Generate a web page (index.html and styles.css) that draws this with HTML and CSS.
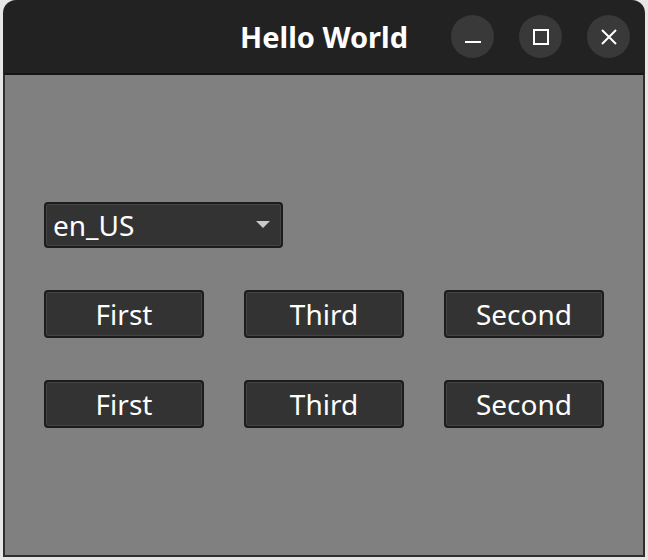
FILE: index.html
```html
<!DOCTYPE html>
<html lang="en">
<head>
    <meta charset="UTF-8">
    <title>Hello World</title>
    <link rel="stylesheet" href="styles.css">
</head>
<body>
    <div class="window">
        <div class="titlebar">
            <div></div>
            <div class="title">Hello World</div>
            <div class="controls">
                <div class="ctrl">
                    <svg width="16" height="16" viewBox="0 0 16 16"><rect x="0" y="12" width="16" height="2" fill="#fff"/></svg>
                </div>
                <div class="ctrl">
                    <svg width="16" height="16" viewBox="0 0 16 16"><rect x="1" y="1" width="14" height="14" fill="none" stroke="#fff" stroke-width="2"/></svg>
                </div>
                <div class="ctrl">
                    <svg width="16" height="16" viewBox="0 0 16 16"><path d="M1 1 L15 15 M15 1 L1 15" stroke="#fff" stroke-width="2"/></svg>
                </div>
            </div>
        </div>
        <div class="content">
            <div class="combo">
                <span>en_US</span>
                <span class="arrow"></span>
            </div>
            <div class="row">
                <button class="btn">First</button>
                <button class="btn">Third</button>
                <button class="btn">Second</button>
            </div>
            <div class="row">
                <button class="btn">First</button>
                <button class="btn">Third</button>
                <button class="btn">Second</button>
            </div>
        </div>
    </div>
</body>
</html>
```
FILE: styles.css
```css
body {
    margin: 0;
    background-color: #e6e6e6;
    font-family: "Noto Sans", "DejaVu Sans", sans-serif;
}
.window {
    margin-left: 3px;
    width: 642px;
    height: 557px;
    display: flex;
    flex-direction: column;
    background-color: #222222;
    border-radius: 13px 13px 0 0;
    overflow: hidden;
}
.titlebar {
    height: 73px;
    flex-shrink: 0;
    display: grid;
    grid-template-columns: 1fr auto 1fr;
    align-items: center;
}
.title {
    color: #ffffff;
    font-weight: bold;
    font-size: 29px;
    padding-bottom: 1px;
}
.controls {
    justify-self: end;
    display: flex;
    gap: 25px;
    padding-right: 15px;
}
.ctrl {
    width: 43px;
    height: 43px;
    border-radius: 50%;
    background-color: #393939;
    display: flex;
    align-items: center;
    justify-content: center;
}
.content {
    flex: 1;
    background-color: #808080;
    border-top: 2px solid #141414;
    border-left: 2px solid #2e2e2e;
    border-right: 2px solid #2e2e2e;
    border-bottom: 2px solid #2e2e2e;
    padding: 127px 0 0 39px;
    display: flex;
    flex-direction: column;
    gap: 42px;
}
.combo {
    box-sizing: border-box;
    width: 239px;
    height: 46px;
    background-color: #333333;
    border: 2px solid #1c1c1c;
    border-radius: 4px;
    box-shadow: inset 0 0 0 1px #444444;
    display: flex;
    align-items: center;
    justify-content: space-between;
    padding: 0 11px 0 7px;
    color: #ffffff;
    font-size: 28px;
}
.arrow {
    width: 0;
    height: 0;
    border-left: 7px solid transparent;
    border-right: 7px solid transparent;
    border-top: 7px solid #c8c8c8;
    margin-bottom: 2px;
}
.row {
    display: flex;
    gap: 40px;
}
.btn {
    box-sizing: border-box;
    width: 160px;
    height: 48px;
    background-color: #333333;
    border: 2px solid #1c1c1c;
    border-radius: 4px;
    box-shadow: inset 0 0 0 1px #444444;
    color: #ffffff;
    font-family: "Noto Sans", "DejaVu Sans", sans-serif;
    font-size: 28px;
    padding: 0;
}
```
